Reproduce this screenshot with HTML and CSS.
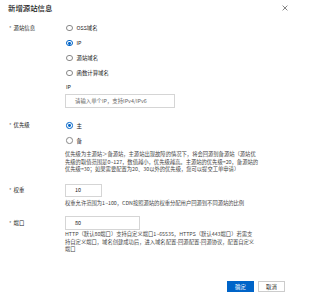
FILE: index.html
```html
<!DOCTYPE html>
<html lang="zh">
<head>
<meta charset="utf-8">
<link rel="stylesheet" href="styles.css">
</head>
<body>
<div class="dialog">
  <div class="header">
    <div class="title">新增源站信息</div>
    <svg class="close" viewBox="0 0 10 10" width="6" height="6"><path d="M1 1L9 9M9 1L1 9" stroke="#555" stroke-width="1.2" fill="none"/></svg>
  </div>
  <div class="form">
    <div class="row">
      <div class="label"><span class="req">*</span>源站信息</div>
      <div class="ctrl">
        <div class="radio"><span class="dot"></span>OSS域名</div>
        <div class="radio on"><span class="dot"></span>IP</div>
        <div class="radio"><span class="dot"></span>源站域名</div>
        <div class="radio"><span class="dot"></span>函数计算域名</div>
        <div class="sublabel">IP</div>
        <div class="input ip"><span class="ph">请输入单个IP，支持IPv4/IPv6</span></div>
      </div>
    </div>
    <div class="row pri">
      <div class="label"><span class="req">*</span>优先级</div>
      <div class="ctrl">
        <div class="radio on"><span class="dot"></span>主</div>
        <div class="radio"><span class="dot"></span>备</div>
        <div class="help desc">优先级为主源站＞备源站，主源站出现故障的情况下，将会回源到备源站（源站优<br>先级的取值范围是0~127，数值越小，优先级越高。主源站的优先级=20，备源站的<br>优先级=30；如果需要配置为20、30以外的优先级，您可以提交工单申请）</div>
      </div>
    </div>
    <div class="row weight">
      <div class="label lab-in"><span class="req">*</span>权重</div>
      <div class="ctrl">
        <div class="input w">10</div>
        <div class="help whelp">权重允许范围为1~100，CDN按照源站的权重分配用户回源到不同源站的比例</div>
      </div>
    </div>
    <div class="row port">
      <div class="label lab-in2"><span class="req">*</span>端口</div>
      <div class="ctrl">
        <div class="input p">80</div>
        <div class="help phelp">HTTP（默认80端口）支持自定义端口1~65535，HTTPS（默认443端口）若需支<br>持自定义端口，域名创建成功后，进入域名配置-回源配置-回源协议，配置自定义<br>端口</div>
      </div>
    </div>
  </div>
  <div class="footer">
    <button class="btn primary">确定</button>
    <button class="btn">取消</button>
  </div>
</div>
</body>
</html>
```
FILE: styles.css
```css
* { box-sizing: border-box; }
html, body { margin: 0; padding: 0; background: #fff; }
body {
  font-family: "Noto Sans CJK SC", "Noto Sans", sans-serif;
  color: #222;
  width: 295px;
  height: 300px;
  overflow: hidden;
}
.dialog {
  padding: 0 8px 8px 8px;
  height: 300px;
  display: flex;
  flex-direction: column;
}
.header {
  display: flex;
  justify-content: space-between;
  align-items: center;
  height: 15px;
}
.title { font-size: 7.4px; color: #222; font-weight: 500; line-height: 15px; }
.close { margin-right: -1px; }
.form { margin-top: 5.5px; }
.row { display: flex; }
.label {
  width: 57px;
  flex: none;
  font-size: 5.4px;
  line-height: 15px;
  color: #222;
  padding-left: 1px;
}
.req { color: #555; margin-right: 2px; }
.ctrl { flex: 1; display: flex; flex-direction: column; align-items: flex-start; }
.radio {
  display: flex;
  align-items: center;
  height: 15px;
  font-size: 5.4px;
  color: #222;
  padding-left: 1px;
}
.dot {
  width: 6.5px;
  height: 6.5px;
  border: 0.6px solid #888;
  border-radius: 50%;
  margin-right: 4px;
  background: #fff;
  position: relative;
}
.radio.on .dot { border-color: #0064c8; }
.radio.on .dot::after {
  content: "";
  position: absolute;
  left: 1.2px; top: 1.2px;
  width: 2.9px; height: 2.9px;
  border-radius: 50%;
  background: #0064c8;
}
.sublabel { font-size: 5.4px; line-height: 8px; margin-top: 2px; padding-left: 1px; }
.input {
  border: 0.6px solid #d5d5d5;
  font-size: 5.4px;
  color: #222;
  display: flex;
  align-items: center;
  padding-left: 9px;
  background: #fff;
}
.ip { width: 110px; height: 14px; margin-top: 3.5px; }
.ph { color: #666; }
.pri { margin-top: 10px; }
.help { font-size: 5.3px; line-height: 7.5px; color: #444; white-space: nowrap; }
.desc { margin-top: 3px; }
.weight { margin-top: 10px; }
.w { width: 37px; height: 13px; }
.lab-in { line-height: 13px; }
.whelp { margin-top: 3.5px; }
.port { margin-top: 8px; }
.p { width: 75px; height: 14px; }
.lab-in2 { line-height: 14px; }
.phelp { margin-top: 1.5px; }
.footer {
  margin-top: auto;
  display: flex;
  justify-content: flex-end;
  gap: 4px;
  padding-right: 2px;
}
.btn {
  width: 27px;
  height: 11px;
  font-family: "Noto Sans CJK SC", sans-serif;
  font-size: 5.4px;
  border: 0.6px solid #ccc;
  background: #fff;
  color: #222;
  padding: 0;
  line-height: 10px;
  border-radius: 0;
}
.btn.primary { background: #0064c8; border-color: #0064c8; color: #fff; }
```
